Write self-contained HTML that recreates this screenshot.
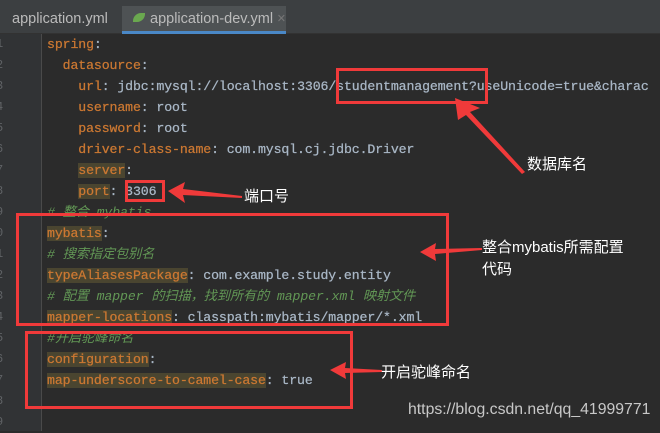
<!DOCTYPE html>
<html><head><meta charset="utf-8"><style>
*{margin:0;padding:0;box-sizing:border-box}
body{width:660px;height:431px;background:#2b2b2b;position:relative;overflow:hidden;font-family:"Liberation Mono",monospace}
.tabs{position:absolute;left:0;top:0;width:660px;height:34px;background:#3c3f41;border-bottom:1px solid #323232}
.tab{position:absolute;top:6px;height:28px;font:14.5px "Liberation Sans",sans-serif;color:#bbbbbb;line-height:26px}
.gut{position:absolute;left:0;top:34px;width:41px;height:397px;background:#313335}
.ln{position:absolute;left:-4px;font-size:12px;color:#606366;line-height:21px;white-space:pre}
.code{position:absolute;left:47px;top:34px;font-size:13.2px;line-height:21px;white-space:pre;color:#a9b7c6;letter-spacing:-0.1px;-webkit-text-stroke:0.25px}
.k{color:#cc7832}.h{background:#4a4530}.c{color:#629755;font-style:italic;-webkit-text-stroke:0}
.box{position:absolute;border:3px solid #f03a3a}
.lbl{position:absolute;color:#fff;font:15px "Liberation Sans","Noto Sans CJK SC",sans-serif;line-height:22px}
</style></head><body>
<div class="tabs">
 <div class="tab" style="left:-2px;width:120px;padding-left:14px">application.yml <span style="color:#777">×</span></div>
 <div class="tab" style="left:122px;width:164px;background:#4e5254;padding-left:28px;border-bottom:3px solid #4a88c7">application-dev.yml <span style="color:#777">×</span></div>
 <div style="position:absolute;left:133px;top:13px;width:12px;height:9px;background:#6aa84f;border-radius:8px 0 8px 0"></div>
</div>
<div class="gut"></div>
<div class="ln" style="top:34px">1
2
3
4
5
6
7
8
9
0
1
2
3
4
5
6
7
8
9</div>
<div style="position:absolute;left:41px;top:34px;width:1px;height:397px;background:#4a4a4a"></div>
<div class="code"><span class="k">spring</span>:
  <span class="k">datasource</span>:
    <span class="k">url</span>: jdbc:mysql://localhost:3306/studentmanagement?useUnicode=true&amp;charac
    <span class="k">username</span>: root
    <span class="k">password</span>: root
    <span class="k">driver-class-name</span>: com.mysql.cj.jdbc.Driver
    <span class="k h">server</span>:
    <span class="k h">port</span>: 3306
<span class="c"># 整合 mybatis</span>
<span class="k h">mybatis</span>:
<span class="c"># 搜索指定包别名</span>
<span class="k h">typeAliasesPackage</span>: com.example.study.entity
<span class="c"># 配置 mapper 的扫描，找到所有的 mapper.xml 映射文件</span>
<span class="k h">mapper-locations</span>: classpath:mybatis/mapper/*.xml
<span class="c">#开启驼峰命名</span>
<span class="k h">configuration</span>:
<span class="k h">map-underscore-to-camel-case</span>: true
</div>
<div class="box" style="left:336px;top:68px;width:152px;height:36px"></div>
<div class="box" style="left:125px;top:180px;width:40px;height:22px"></div>
<div class="box" style="left:16px;top:213px;width:433px;height:113px"></div>
<div class="box" style="left:25px;top:331px;width:328px;height:78px"></div>
<svg style="position:absolute;left:0;top:0" width="660" height="431">
 <g fill="#f03a3a">
  <polygon points="455,98 480,108 470,112 525,172 522,174 466,115 458,120"/>
  <polygon points="168,191 185,182 183,189 242,196 242,198 183,195 185,203"/>
  <polygon points="420,252 436,243 435,249 482,248 482,250 435,254 436,261"/>
  <polygon points="330,370 346,362 345,368 382,370 382,372 345,373 346,379"/>
 </g>
</svg>
<div class="lbl" style="left:527px;top:154px">数据库名</div>
<div class="lbl" style="left:244px;top:186px">端口号</div>
<div class="lbl" style="left:482px;top:237px">整合mybatis所需配置<br>代码</div>
<div class="lbl" style="left:381px;top:362px">开启驼峰命名</div>
<div style="position:absolute;left:408px;top:401px;font:15.8px 'Liberation Sans',sans-serif;color:#c8c8c8">https://blog.csdn.net/qq_41999771</div>
</body></html>
